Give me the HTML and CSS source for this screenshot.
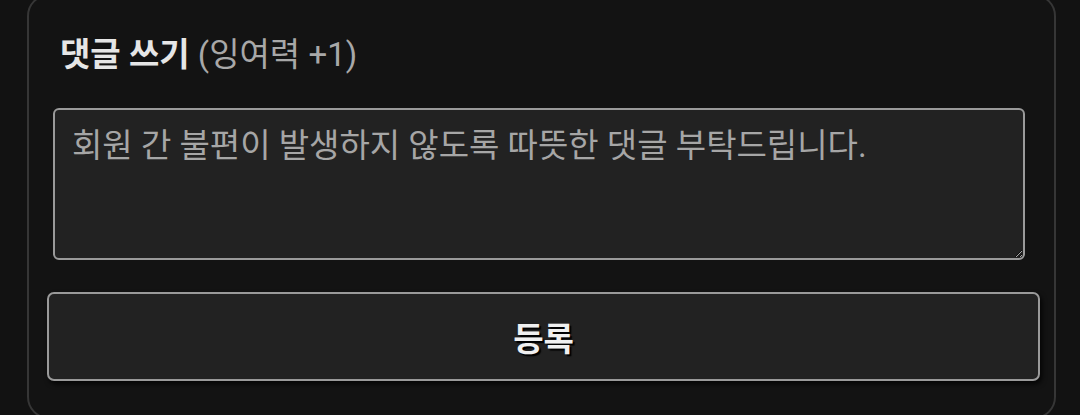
FILE: index.html
```html
<!DOCTYPE html>
<html lang="ko">
<head>
<meta charset="utf-8">
<link rel="stylesheet" href="styles.css">
</head>
<body>
<section class="card">
  <h2 class="title"><strong>댓글 쓰기</strong> <span class="bonus">(잉여력 +1)</span></h2>
  <textarea class="input" placeholder="회원 간 불편이 발생하지 않도록 따뜻한 댓글 부탁드립니다."></textarea>
  <button class="submit" type="button">등록</button>
</section>
</body>
</html>
```

FILE: styles.css
```css
html, body {
  margin: 0;
  padding: 0;
  background: #121212;
  height: 415px;
  overflow: hidden;
}
body {
  font-family: "Roboto", "Noto Sans CJK KR", sans-serif;
}
.card {
  box-sizing: border-box;
  margin: -6px 0 0 27px;
  width: 1029px;
  height: 425px;
  border: 2px solid #363636;
  border-radius: 22px;
  background: #131313;
  padding: 0 15px 0 18px;
}
.title {
  margin: 0;
  padding: 34px 0 0 13px;
  font-size: 33px;
  font-weight: 400;
  line-height: 50px;
  color: #a8a8a8;
}
.title strong {
  font-weight: 700;
  color: #e6e6e6;
}
.input {
  display: block;
  box-sizing: border-box;
  margin: 28px 0 0 6px;
  width: 972px;
  height: 152px;
  padding: 15px 17px 7px;
  background: #222222;
  border: 2px solid #9a9a9a;
  border-radius: 6px;
  font-family: "Roboto", "Noto Sans CJK KR", sans-serif;
  font-size: 33px;
  line-height: 42px;
  color: #dddddd;
  resize: vertical;
  outline: none;
}
.input::placeholder {
  color: #a6a6a6;
}
.submit {
  display: block;
  box-sizing: border-box;
  margin: 32px 0 0 0;
  width: 993px;
  height: 89px;
  background: #222222;
  border: 2px solid #9a9a9a;
  border-radius: 7px;
  box-shadow: 2px 3px 5px rgba(0, 0, 0, 0.8);
  font-family: "Roboto", "Noto Sans CJK KR", sans-serif;
  font-size: 33px;
  font-weight: 700;
  color: #f0f0f0;
  text-shadow: 2px 2px 1px #000;
  cursor: pointer;
}
```
